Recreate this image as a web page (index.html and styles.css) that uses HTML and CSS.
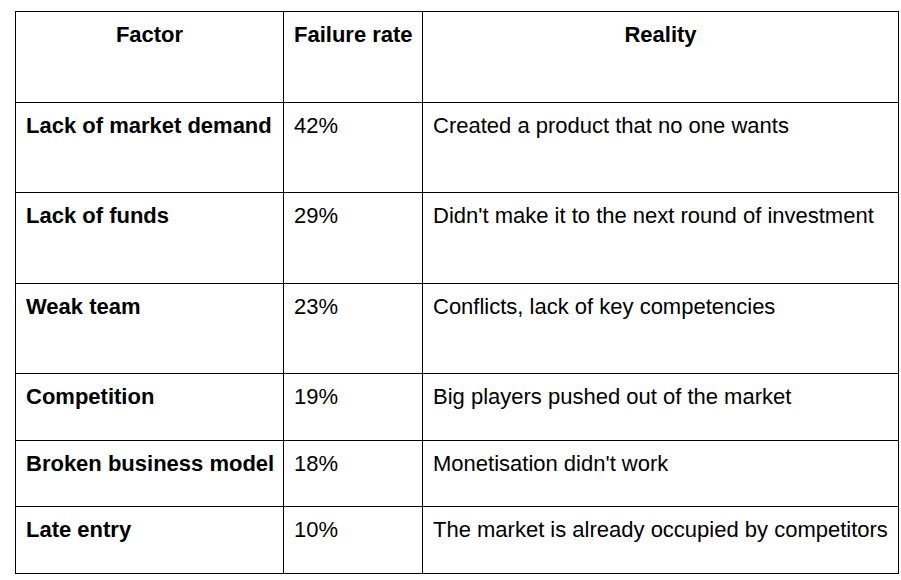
FILE: index.html
```html
<!DOCTYPE html>
<html lang="en">
<head>
<meta charset="utf-8">
<title>Startup failure factors</title>
<link rel="stylesheet" href="styles.css">
</head>
<body>
<table class="factors">
  <colgroup>
    <col class="c1">
    <col class="c2">
    <col class="c3">
  </colgroup>
  <thead>
    <tr class="h91">
      <th>Factor</th>
      <th>Failure rate</th>
      <th>Reality</th>
    </tr>
  </thead>
  <tbody>
    <tr class="h90">
      <td class="name">Lack of market demand</td>
      <td>42%</td>
      <td>Created a product that no one wants</td>
    </tr>
    <tr class="h91">
      <td class="name">Lack of funds</td>
      <td>29%</td>
      <td>Didn't make it to the next round of investment</td>
    </tr>
    <tr class="h90">
      <td class="name">Weak team</td>
      <td>23%</td>
      <td>Conflicts, lack of key competencies</td>
    </tr>
    <tr class="h67">
      <td class="name">Competition</td>
      <td>19%</td>
      <td>Big players pushed out of the market</td>
    </tr>
    <tr class="h66">
      <td class="name">Broken business model</td>
      <td>18%</td>
      <td>Monetisation didn't work</td>
    </tr>
    <tr class="h67">
      <td class="name">Late entry</td>
      <td>10%</td>
      <td>The market is already occupied by competitors</td>
    </tr>
  </tbody>
</table>
</body>
</html>
```
FILE: styles.css
```css
html, body {
  margin: 0;
  padding: 0;
  background: #ffffff;
}
body {
  font-family: "Liberation Sans", Arial, sans-serif;
  font-size: 22px;
  color: #000000;
}
.factors {
  border-collapse: collapse;
  table-layout: fixed;
  margin: 11px 0 0 15px;
  width: 883px;
}
.c1 { width: 268px; }
.c2 { width: 139px; }
.c3 { width: 476px; }
.factors th,
.factors td {
  border: 1px solid #000000;
  padding: 10px 10px 0 10px;
  vertical-align: top;
  text-align: left;
  line-height: 25px;
  white-space: nowrap;
  box-sizing: border-box;
  overflow: visible;
}
.factors th {
  text-align: center;
  font-weight: bold;
}
.factors td.name {
  font-weight: bold;
}
.h91 { height: 91px; }
.h90 { height: 90px; }
.h67 { height: 67px; }
.h66 { height: 66px; }
```
